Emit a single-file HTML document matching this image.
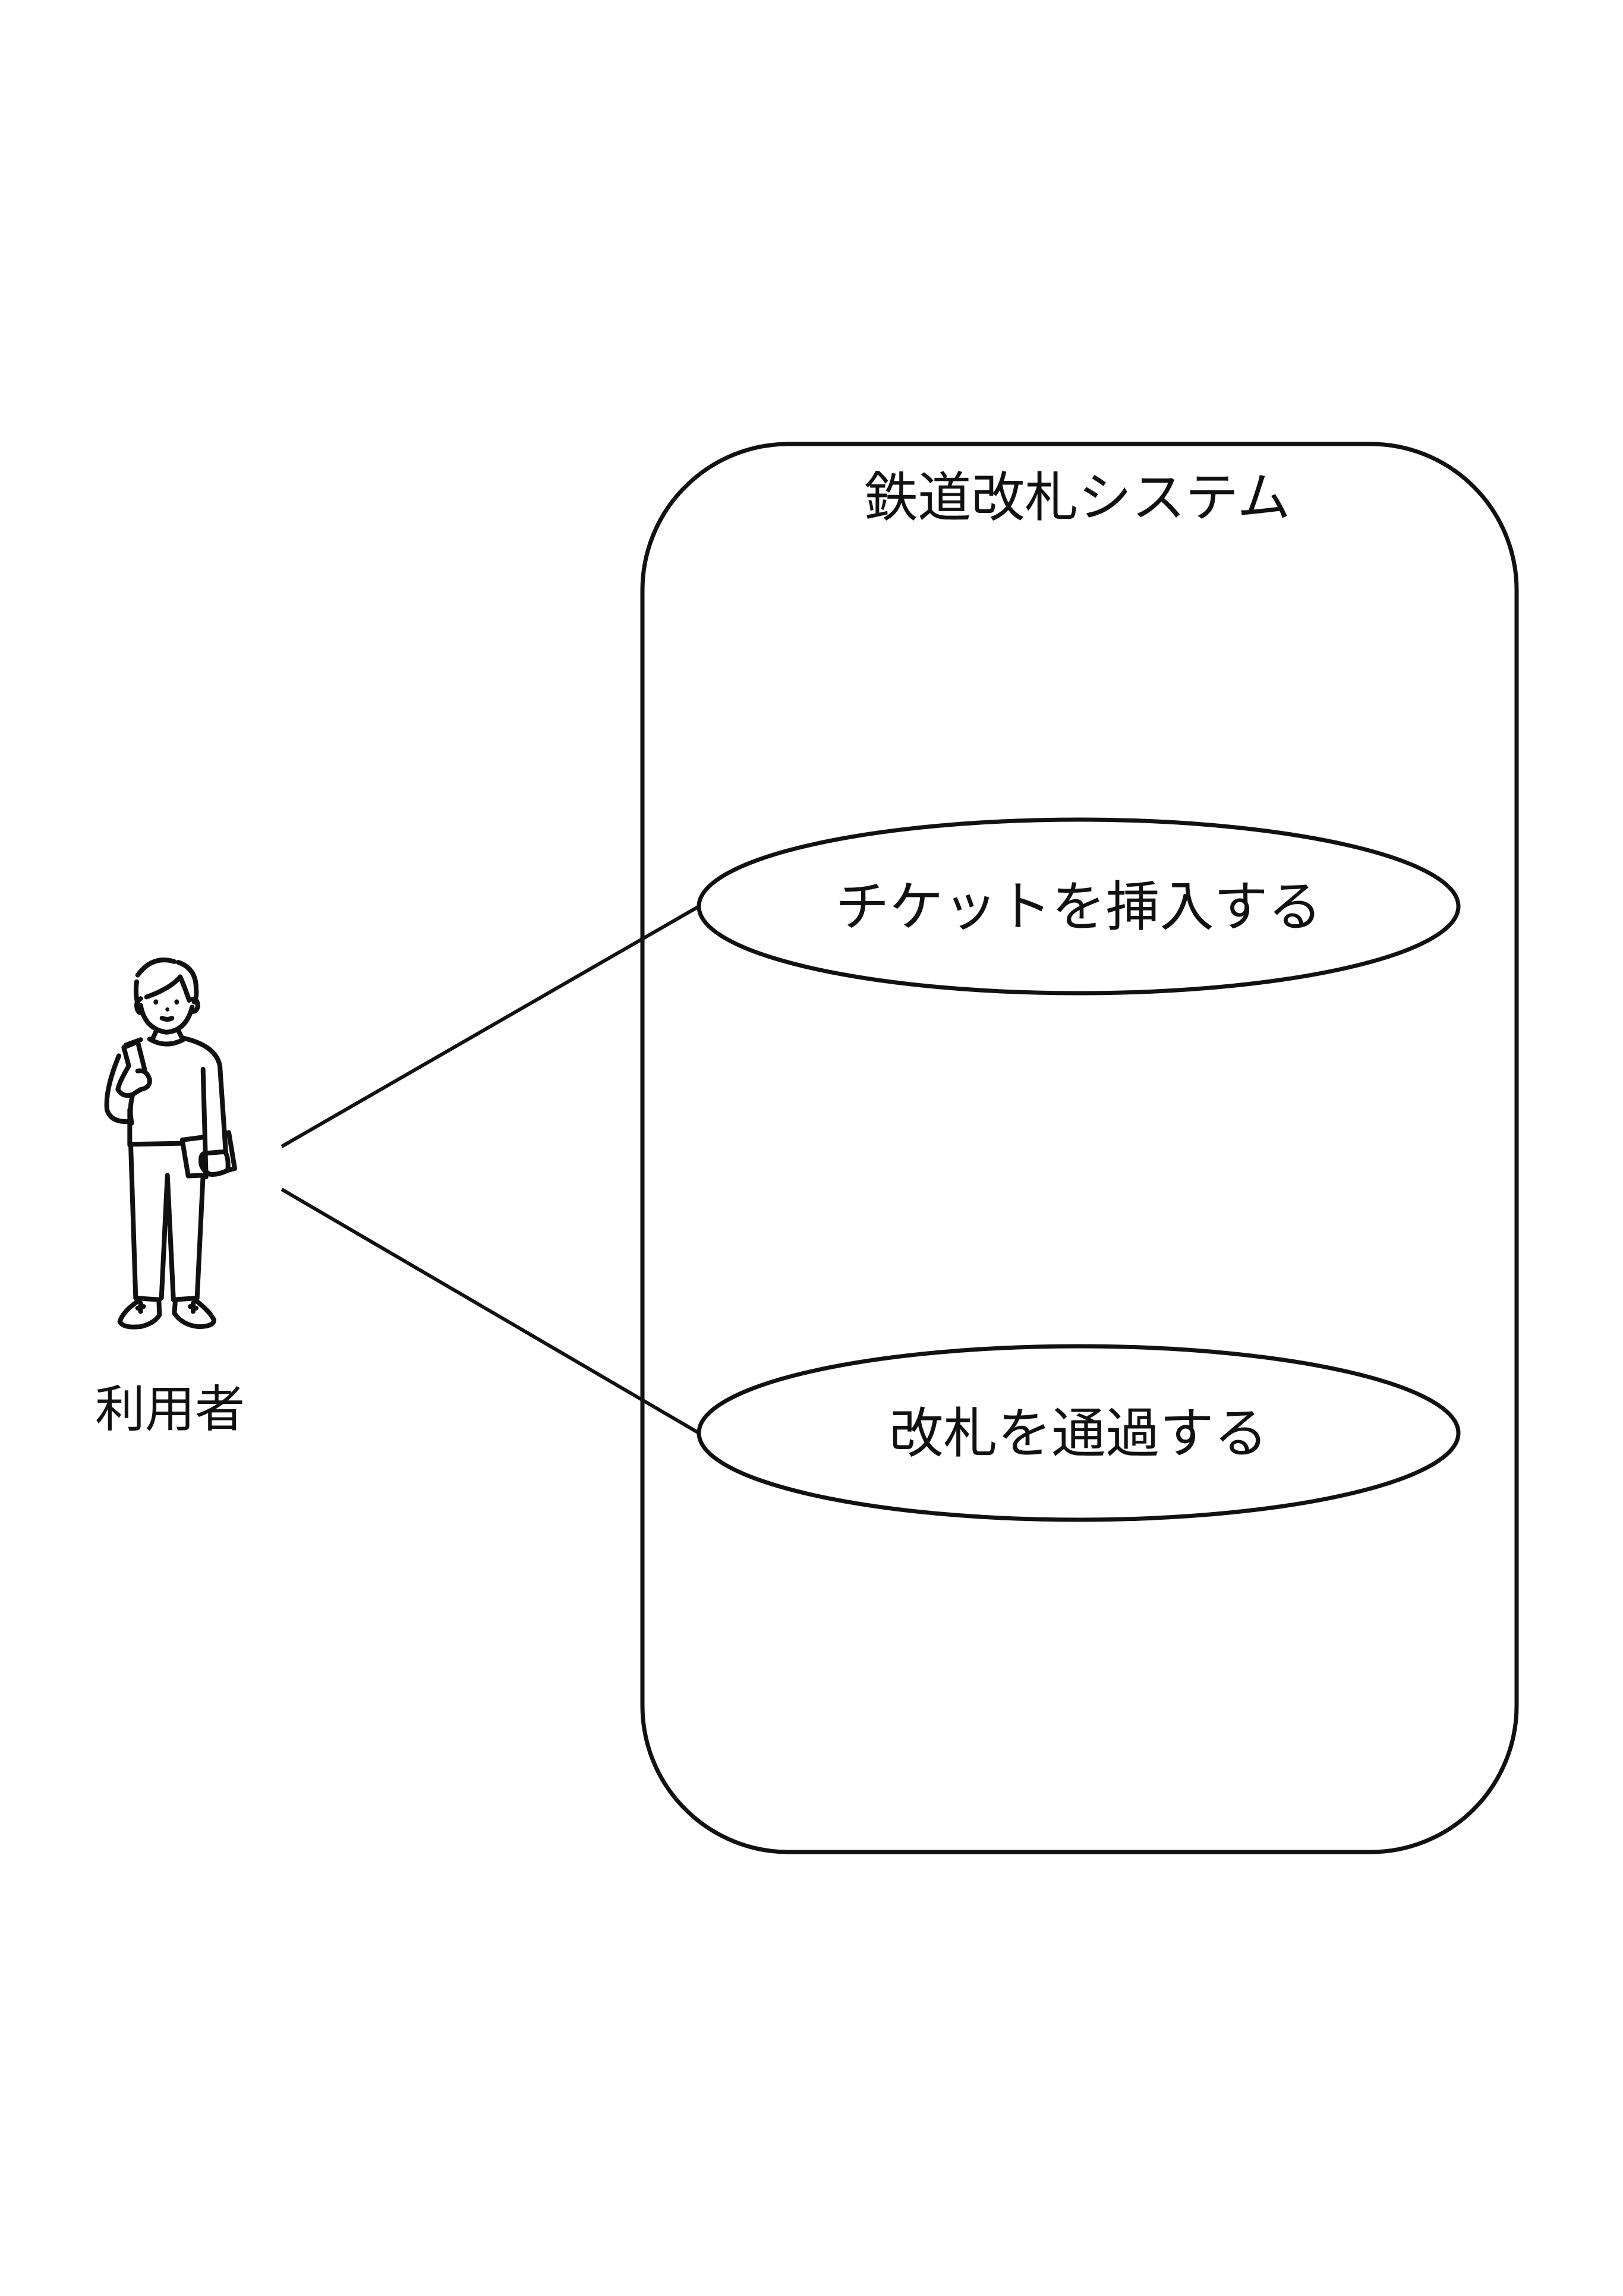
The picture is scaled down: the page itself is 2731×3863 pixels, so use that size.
<!DOCTYPE html>
<html><head><meta charset="utf-8"><style>
html,body{margin:0;padding:0;background:#fff;}
body{width:2731px;height:3863px;position:relative;overflow:hidden;}
svg{position:absolute;left:0;top:0;}
text{font-family:"Liberation Sans","Noto Sans CJK JP",sans-serif;fill:#111;}
</style></head><body>
<svg width="2731" height="3863" viewBox="0 0 2731 3863">
  <rect x="1081" y="747" width="1471" height="2369" rx="246" ry="246" fill="none" stroke="#111" stroke-width="7"/>
  <text x="1813" y="868" font-size="90" text-anchor="middle">鉄道改札システム</text>
  <ellipse cx="1815" cy="1525" rx="639" ry="146" fill="none" stroke="#111" stroke-width="7"/>
  <ellipse cx="1815" cy="2411" rx="639" ry="146" fill="none" stroke="#111" stroke-width="7"/>
  <text x="1815" y="1557" font-size="91" text-anchor="middle">チケットを挿入する</text>
  <text x="1815" y="2443" font-size="91" text-anchor="middle">改札を通過する</text>
  <line x1="474" y1="1929" x2="1176" y2="1525" stroke="#111" stroke-width="6"/>
  <line x1="474" y1="2001" x2="1176" y2="2411" stroke="#111" stroke-width="6"/>
  <text x="286" y="2400" font-size="84" text-anchor="middle">利用者</text>
</svg>
<svg style="left:100px;top:1550px" width="400" height="900" viewBox="0 0 1200 1590" preserveAspectRatio="none">
 <g fill="none" stroke="#111" stroke-width="8" stroke-linecap="round" stroke-linejoin="round">
  <path vector-effect="non-scaling-stroke" d="M395,160 Q470,100 580,120 M600,122 Q690,140 690,200"/>
  <path vector-effect="non-scaling-stroke" d="M390,180 Q380,220 400,255 M690,200 Q695,225 680,240"/>
  <path vector-effect="non-scaling-stroke" d="M410,250 Q430,320 540,330 Q640,325 670,255"/>
  <path vector-effect="non-scaling-stroke" d="M410,230 Q380,240 395,265 Q405,275 420,272 M670,232 Q700,230 698,255 Q690,270 668,268"/>
  <path vector-effect="non-scaling-stroke" d="M440,225 Q560,200 610,165 Q635,200 655,235"/>
  <path vector-effect="non-scaling-stroke" d="M518,288 Q545,295 568,288"/>
  <path vector-effect="non-scaling-stroke" d="M490,325 L470,350 M600,325 L620,348 M455,350 Q540,380 630,350"/>
  <path vector-effect="non-scaling-stroke" d="M630,348 Q790,370 810,430 L840,690 M725,440 L740,760"/>
  <path vector-effect="non-scaling-stroke" d="M410,352 L335,368 M300,400 Q230,500 240,560 Q260,600 360,595"/>
  <path vector-effect="non-scaling-stroke" d="M355,560 L355,665 M360,663 L620,660"/>
  <path vector-effect="non-scaling-stroke" d="M325,375 L395,358 L430,440 M350,430 L325,375"/>
  <path vector-effect="non-scaling-stroke" d="M350,430 Q300,480 295,500 Q320,525 370,515 L410,500 Q460,495 455,470 Q440,440 395,445 M370,515 Q350,560 365,600"/>
  <path vector-effect="non-scaling-stroke" d="M620,650 L725,642 M620,650 L650,757 L725,755 M845,630 L855,628 L885,735 L852,740"/>
  <path vector-effect="non-scaling-stroke" d="M730,690 L835,685 Q855,700 850,740 Q800,755 760,752 Q720,740 715,720 Q710,695 730,690"/>
  <path vector-effect="non-scaling-stroke" d="M360,665 L385,1120 M725,755 L695,1120 M545,755 L515,1120 M545,755 L575,1120"/>
  <path vector-effect="non-scaling-stroke" d="M385,1120 L505,1125 M575,1125 L695,1120"/>
  <path vector-effect="non-scaling-stroke" d="M395,1130 Q320,1160 305,1190 Q320,1210 410,1205 Q480,1195 505,1170 L502,1128"/>
  <path vector-effect="non-scaling-stroke" d="M585,1128 L580,1165 Q620,1200 700,1205 Q780,1205 780,1185 Q760,1160 690,1128"/>
  <path vector-effect="non-scaling-stroke" d="M395,1150 L425,1145 M410,1135 L410,1160 M660,1145 L690,1150 M675,1135 L675,1160"/>
 </g>
 <g fill="#111">
  <ellipse cx="487" cy="240" rx="12" ry="8"/><ellipse cx="592" cy="240" rx="12" ry="8"/><ellipse cx="545" cy="262" rx="10" ry="6"/>
 </g>
</svg>
</body></html>
